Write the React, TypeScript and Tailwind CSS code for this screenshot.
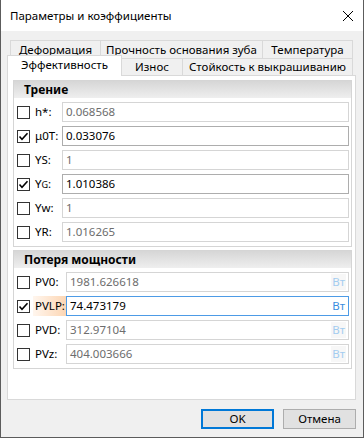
import React from "react";

const F = "font-['Noto_Sans',sans-serif]";

function Check({ checked }: { checked: boolean }) {
  return (
    <div className="w-[13px] h-[13px] border border-[#333333] bg-white flex items-center justify-center shrink-0">
      {checked && (
        <svg width="11" height="11" viewBox="0 0 11 11">
          <path d="M1.5 5.5 L4 8.2 L9.5 2.2" fill="none" stroke="#000" strokeWidth="1.6" />
        </svg>
      )}
    </div>
  );
}

type Row = { label: React.ReactNode; value: string; checked: boolean; unit?: boolean; focus?: boolean };

function Field({ row, labelW }: { row: Row; labelW: string }) {
  const border = row.focus
    ? "border-[#4d9be6]"
    : row.checked
    ? "border-[#adadad]"
    : "border-[#d5d5d5]";
  return (
    <div className="flex items-center h-[20px]">
      <Check checked={row.checked} />
      <div
        className={`${labelW} ml-[3px] h-[20px] flex items-center pl-[2px] text-[11.5px] text-black ${
          row.focus ? "bg-gradient-to-r from-[#fff6ee] to-[#fcd6b4]" : ""
        }`}
      >
        {row.label}
      </div>
      <div className={`flex-1 h-[20px] border ${border} bg-white flex items-center pl-[3px] pr-[2px]`}>
        <span className={`flex-1 text-[11.5px] ${row.checked ? "text-black" : "text-[#6d6d6d]"}`}>{row.value}</span>
        {row.unit && (
          <span
            className={`text-[11.5px] px-[1px] h-[16px] flex items-center ${
              row.focus ? "text-[#3a8de0]" : "text-[#a3ccf0] bg-[#f7f7f7]"
            }`}
          >
            Вт
          </span>
        )}
      </div>
    </div>
  );
}

function Group({ title, rows, labelW }: { title: string; rows: Row[]; labelW: string }) {
  return (
    <div className="border border-[#d5d5d5] bg-white">
      <div className="h-[17px] bg-gradient-to-b from-[#d6d6d6] to-[#efefef] flex items-center pl-[10px] text-[12px] font-bold text-black">
        {title}
      </div>
      <div className="flex flex-col gap-[4px] pt-[4px] pb-[4px] pl-[3px] pr-[2px]">
        {rows.map((r, i) => (
          <Field key={i} row={r} labelW={labelW} />
        ))}
      </div>
    </div>
  );
}

export default function App() {
  const friction: Row[] = [
    { label: "h*:", value: "0.068568", checked: false },
    { label: "μ0T:", value: "0.033076", checked: true },
    { label: "YS:", value: "1", checked: false },
    { label: <span>Y<span className="text-[9px]">G</span>:</span>, value: "1.010386", checked: true },
    { label: "Yw:", value: "1", checked: false },
    { label: "YR:", value: "1.016265", checked: false },
  ];
  const power: Row[] = [
    { label: "PV0:", value: "1981.626618", checked: false, unit: true },
    { label: "PVLP:", value: "74.473179", checked: true, unit: true, focus: true },
    { label: "PVD:", value: "312.97104", checked: false, unit: true },
    { label: "PVz:", value: "404.003666", checked: false, unit: true },
  ];

  const tab = "flex items-center justify-center text-[11.5px] text-black border-t border-r border-[#d9d9d9] bg-[#f0f0f0]";

  return (
    <div className={`${F} w-[364px] h-[438px] bg-[#f0f0f0] border-l border-r border-b border-[#5c5c5c] flex flex-col`}>
      <div className="h-[31px] bg-white flex items-center justify-between pl-[9px] pr-[9px] shrink-0">
        <span className="text-[11.5px] text-black">Параметры и коэффициенты</span>
        <svg width="12" height="12" viewBox="0 0 12 12">
          <path d="M1 1 L11 11 M11 1 L1 11" stroke="#000" strokeWidth="1" />
        </svg>
      </div>

      <div className="mt-[9px] ml-[9px] flex h-[18px]">
        <div className={`${tab} border-l w-[91px]`}>Деформация</div>
        <div className={`${tab} w-[162px]`}>Прочность основания зуба</div>
        <div className={`${tab} w-[90px]`}>Температура</div>
      </div>
      <div className="-mt-[3px] ml-[6px] flex items-end h-[20px] relative z-10">
        <div className="w-[115px] h-[21px] -mb-px bg-white border-l border-t border-r border-[#d9d9d9] flex items-center justify-center pb-[2px] text-[11.5px] text-black">
          Эффективность
        </div>
        <div className={`${tab} w-[61px] h-[17px]`}>Износ</div>
        <div className={`${tab} w-[170px] h-[17px]`}>Стойкость к выкрашиванию</div>
      </div>

      <div className="ml-[6px] w-[349px] h-[325px] bg-white border border-[#d9d9d9] pt-[4px] pl-[5px] pr-[3px] flex flex-col gap-[3px]">
        <Group title="Трение" rows={friction} labelW="w-[29px]" />
        <Group title="Потеря мощности" rows={power} labelW="w-[33px]" />
      </div>

      <div className="mt-[9px] flex justify-end gap-[9px] pr-[7px]">
        <button className="w-[73px] h-[20px] border-2 border-[#0078d7] bg-[#e1e1e1] text-[11.5px] text-black flex items-center justify-center">
          OK
        </button>
        <button className="w-[73px] h-[20px] border border-[#adadad] bg-[#e1e1e1] text-[11.5px] text-black flex items-center justify-center">
          Отмена
        </button>
      </div>
    </div>
  );
}
